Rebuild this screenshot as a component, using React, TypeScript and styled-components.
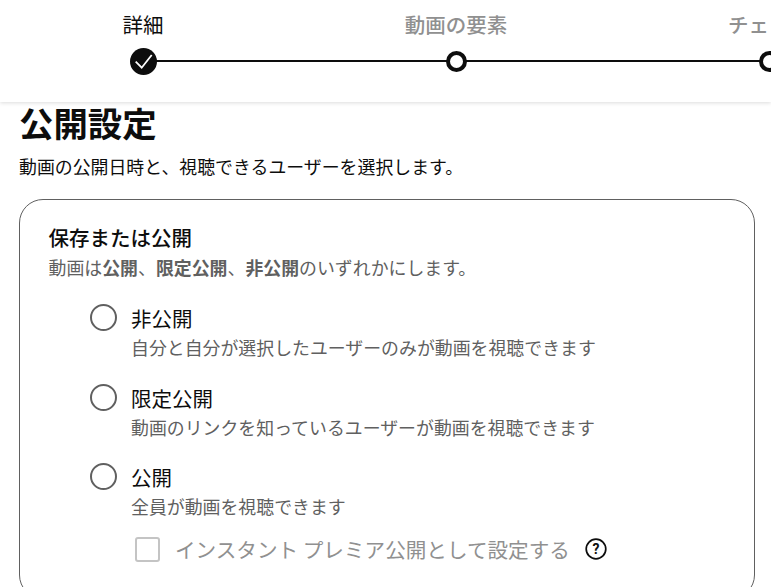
import React from "react";
import styled, { createGlobalStyle } from "styled-components";

const GlobalStyle = createGlobalStyle`
	html, body {
		margin: 0;
		padding: 0;
		background: #fff;
		overflow: hidden;
	}
	body {
		font-family: "Noto Sans CJK JP", "Noto Sans", sans-serif;
		color: #0d0d0d;
	}
`;

const Page = styled.div`
	width: 771px;
	height: 587px;
	overflow: hidden;
`;

const Header = styled.header`
	height: 102px;
	box-shadow: 0 1px 4px rgba(0, 0, 0, 0.14);
	overflow: hidden;
	position: relative;
`;

const Steps = styled.div`
	display: flex;
	width: 939px;
	margin-left: -13.5px;
	padding-top: 10px;
`;

const Step = styled.div`
	flex: 0 0 313px;
	display: flex;
	flex-direction: column;
	align-items: center;
	position: relative;
`;

const StepLabel = styled.div<{ $active?: boolean }>`
	font-size: 20.5px;
	line-height: 28px;
	height: 28px;
	white-space: nowrap;
	color: ${(p) => (p.$active ? "#0d0d0d" : "#909090")};
	font-weight: ${(p) => (p.$active ? 400 : 500)};
`;

const Track = styled.div`
	position: relative;
	height: 28px;
	width: 100%;
	margin-top: 9px;
	display: flex;
	justify-content: center;
	align-items: center;
`;

const Line = styled.div`
	position: absolute;
	left: 50%;
	width: 100%;
	top: 13px;
	height: 2px;
	background: #0d0d0d;
`;

const DoneDot = styled.div`
	position: relative;
	width: 27px;
	height: 27px;
	border-radius: 50%;
	background: #0d0d0d;
	display: flex;
	align-items: center;
	justify-content: center;
`;

const OpenDot = styled.div`
	position: relative;
	box-sizing: border-box;
	width: 21px;
	height: 21px;
	border-radius: 50%;
	border: 4px solid #0d0d0d;
	background: #fff;
`;

const Main = styled.main`
	padding: 0 16px 0 19px;
`;

const Title = styled.h1`
	margin: 0;
	font-size: 34.4px;
	line-height: 46px;
	font-weight: 700;
	margin-top: -3px;
`;

const Subtitle = styled.p`
	margin: 9px 0 0;
	font-size: 17.9px;
	line-height: 24px;
	white-space: nowrap;
`;

const Card = styled.section`
	box-sizing: border-box;
	width: 736px;
	height: 400px;
	margin-top: 21px;
	border: 1px solid #606060;
	border-radius: 24px;
	padding: 23px 28.5px;
`;

const CardTitle = styled.h2`
	margin: 0;
	font-size: 20.5px;
	line-height: 28px;
	font-weight: 500;
`;

const CardHint = styled.p`
	margin: 4px 0 0;
	font-size: 17.9px;
	line-height: 24px;
	color: #606060;
	white-space: nowrap;

	b {
		font-weight: 700;
	}
`;

const Options = styled.div`
	margin-top: 25px;
	padding-left: 41.5px;
	display: flex;
	flex-direction: column;
	gap: 24.5px;
`;

const Option = styled.div`
	display: flex;
	gap: 14px;
`;

const Radio = styled.span`
	flex: none;
	box-sizing: border-box;
	width: 27px;
	height: 27px;
	border-radius: 50%;
	border: 2px solid #606060;
`;

const OptionBody = styled.div`
	display: flex;
	flex-direction: column;
`;

const OptionLabel = styled.div`
	font-size: 20.5px;
	line-height: 28px;
`;

const OptionHint = styled.div`
	font-size: 17.9px;
	line-height: 24px;
	margin-top: 3px;
	color: #606060;
	white-space: nowrap;
`;

const PremiereRow = styled.div`
	display: flex;
	align-items: center;
	margin-top: 17px;
	padding-left: 86.5px;
`;

const CheckBox = styled.span`
	box-sizing: border-box;
	width: 25px;
	height: 25px;
	border: 2px solid #c4c4c4;
	border-radius: 3px;
`;

const PremiereLabel = styled.span`
	margin-left: 15px;
	font-size: 20.6px;
	line-height: 28px;
	color: #909090;
	white-space: nowrap;
`;

const HelpIcon = styled.svg`
	width: 26px;
	height: 26px;
	margin-left: 13px;
`;

export default function App() {
	return (
		<Page>
			<GlobalStyle />
			<Header>
				<Steps>
					<Step>
						<StepLabel $active>詳細</StepLabel>
						<Track>
							<Line />
							<DoneDot>
								<svg width="20" height="20" viewBox="0 0 20 20" fill="none">
									<path d="M2.7 10.7l6 6L18.7 4" stroke="#fff" strokeWidth="1.8" />
								</svg>
							</DoneDot>
						</Track>
					</Step>
					<Step>
						<StepLabel>動画の要素</StepLabel>
						<Track>
							<Line />
							<OpenDot />
						</Track>
					</Step>
					<Step>
						<StepLabel>チェック</StepLabel>
						<Track>
							<OpenDot />
						</Track>
					</Step>
				</Steps>
			</Header>
			<Main>
				<Title>公開設定</Title>
				<Subtitle>動画の公開日時と、視聴できるユーザーを選択します。</Subtitle>
				<Card>
					<CardTitle>保存または公開</CardTitle>
					<CardHint>
						動画は<b>公開</b>、<b>限定公開</b>、<b>非公開</b>のいずれかにします。
					</CardHint>
					<Options>
						<Option>
							<Radio />
							<OptionBody>
								<OptionLabel>非公開</OptionLabel>
								<OptionHint>自分と自分が選択したユーザーのみが動画を視聴できます</OptionHint>
							</OptionBody>
						</Option>
						<Option>
							<Radio />
							<OptionBody>
								<OptionLabel>限定公開</OptionLabel>
								<OptionHint>動画のリンクを知っているユーザーが動画を視聴できます</OptionHint>
							</OptionBody>
						</Option>
						<Option>
							<Radio />
							<OptionBody>
								<OptionLabel>公開</OptionLabel>
								<OptionHint>全員が動画を視聴できます</OptionHint>
							</OptionBody>
						</Option>
					</Options>
					<PremiereRow>
						<CheckBox />
						<PremiereLabel>インスタント プレミア公開として設定する</PremiereLabel>
						<HelpIcon viewBox="0 0 26 26" fill="none">
							<circle cx="13" cy="13" r="9.8" stroke="#0d0d0d" strokeWidth="1.7" />
							<text x="13" y="18" textAnchor="middle" fontSize="14" fontWeight="700" fontFamily="Roboto, sans-serif" fill="#0d0d0d">?</text>
						</HelpIcon>
					</PremiereRow>
				</Card>
			</Main>
		</Page>
	);
}
